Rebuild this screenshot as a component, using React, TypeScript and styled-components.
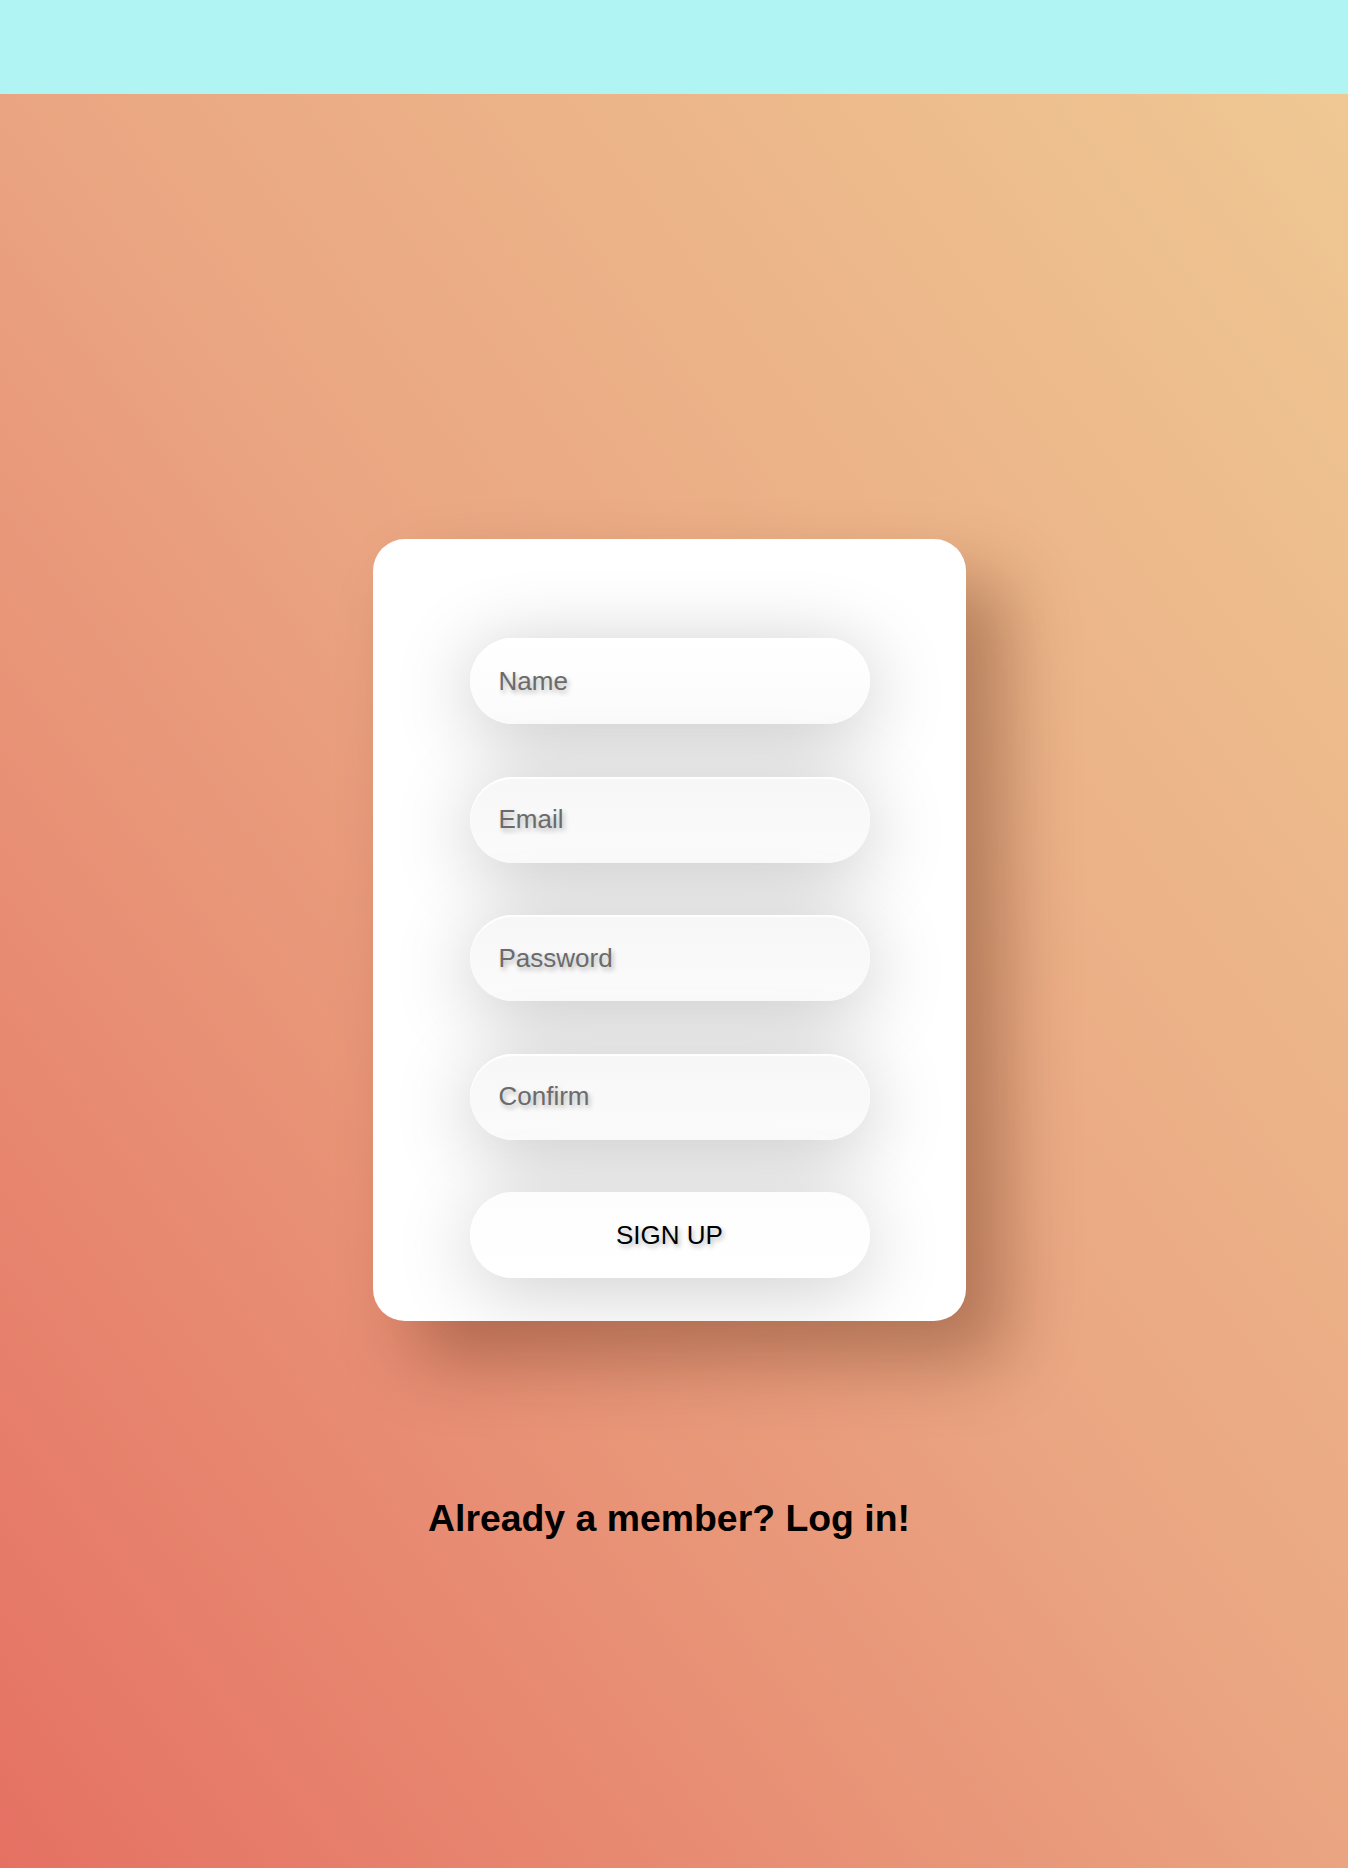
import styled, { createGlobalStyle } from "styled-components";

const GlobalStyle = createGlobalStyle`
  * {
    box-sizing: border-box;
  }
  body {
    margin: 0;
    font-family: "Liberation Sans", Arial, Helvetica, sans-serif;
    background: #e8a07c;
  }
`;

const Page = styled.div`
  display: flex;
  flex-direction: column;
  min-height: 1868px;
`;

const TopBar = styled.header`
  height: 94px;
  background-color: #b0f4f4;
`;

const Main = styled.main`
  flex: 1;
  display: flex;
  flex-direction: column;
  align-items: center;
  padding: 445px 10px 0 0;
  background: linear-gradient(to top right, #e57163 0%, #eaa682 52%, #efc893 100%);
`;

const Card = styled.form`
  width: 593px;
  padding: 99px 96px 43px 97px;
  display: flex;
  flex-direction: column;
  gap: 52.5px;
  background-color: #ffffff;
  border-radius: 32px;
  overflow: hidden;
  box-shadow: 40px 40px 70px rgba(70, 25, 5, 0.34);
`;

const Field = styled.input<{ $light?: boolean }>`
  width: 400px;
  height: 86px;
  flex-shrink: 0;
  padding: 0 29px;
  border: none;
  outline: none;
  border-radius: 43px;
  font-family: "Liberation Sans", Arial, sans-serif;
  font-size: 26px;
  color: #333;
  background: ${(p) =>
    p.$light
      ? "linear-gradient(#ffffff, #fbfbfb)"
      : "linear-gradient(#f7f7f7, #fbfbfb)"};
  box-shadow: 0 12px 80px rgba(0, 0, 0, 0.23),
    inset 0 2px 1px rgba(255, 255, 255, 0.95);

  &::placeholder {
    color: #6b6b6b;
    text-shadow: 2px 3px 5px rgba(0, 0, 0, 0.28);
  }
`;

const SubmitButton = styled.button`
  width: 400px;
  height: 86px;
  flex-shrink: 0;
  border: none;
  border-radius: 43px;
  cursor: pointer;
  font-family: "Liberation Sans", Arial, sans-serif;
  font-size: 26px;
  color: #000;
  background: linear-gradient(#fdfdfd, #ffffff);
  text-shadow: 2px 3px 5px rgba(0, 0, 0, 0.28);
  box-shadow: 0 12px 80px rgba(0, 0, 0, 0.2);
`;

const LoginLink = styled.h2`
  margin: 176px 0 0;
  font-size: 37.4px;
  font-weight: bold;
  color: #000;
  cursor: pointer;
`;

const fields = [
  { name: "name", type: "text", label: "Name" },
  { name: "email", type: "email", label: "Email" },
  { name: "password", type: "password", label: "Password" },
  { name: "confirm", type: "password", label: "Confirm" },
];

export default function App() {
  return (
    <>
      <GlobalStyle />
      <Page>
        <TopBar />
        <Main>
          <Card onSubmit={(e) => e.preventDefault()}>
            {fields.map((f, i) => (
              <Field
                key={f.name}
                name={f.name}
                type={f.type}
                placeholder={f.label}
                $light={i === 0}
              />
            ))}
            <SubmitButton type="submit">SIGN UP</SubmitButton>
          </Card>
          <LoginLink>Already a member? Log in!</LoginLink>
        </Main>
      </Page>
    </>
  );
}
